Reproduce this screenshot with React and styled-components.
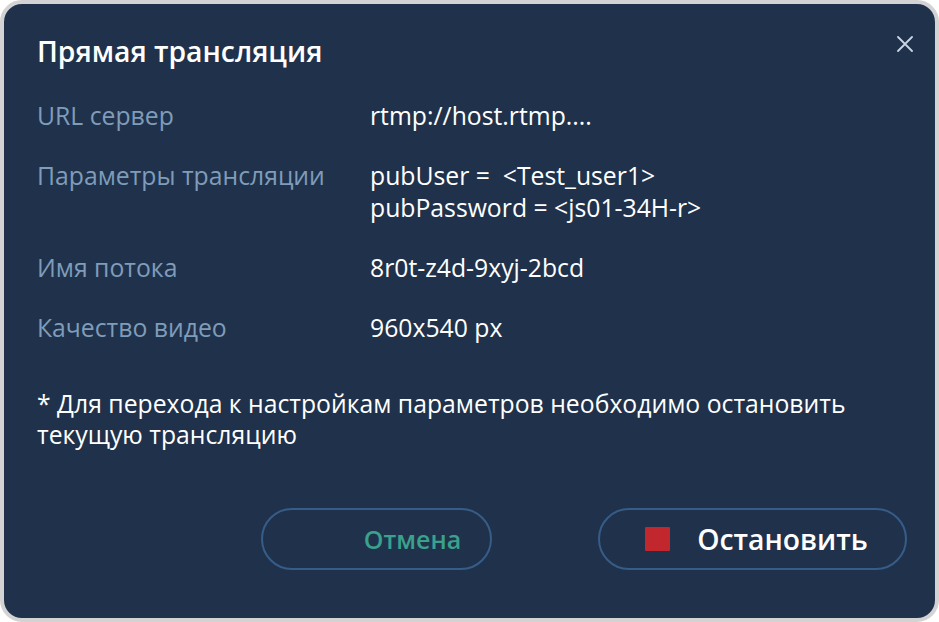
import React from "react";
import styled, { createGlobalStyle } from "styled-components";

const Global = createGlobalStyle`
  html, body { margin: 0; padding: 0; background: #ffffff; }
  body { font-family: "Open Sans", "Noto Sans", sans-serif; }
  * { box-sizing: border-box; }
`;

const Dialog = styled.div`
  position: relative;
  width: 939px;
  height: 622px;
  background: #20324b;
  border: 4px solid #d3d3d3;
  border-radius: 22px;
  padding: 29px 28px 0 33px;
  display: flex;
  flex-direction: column;
  color: #ffffff;
`;

const Title = styled.h1`
  margin: 0;
  font-size: 28.3px;
  font-weight: 600;
  line-height: 36px;
  color: #ffffff;
`;

const CloseButton = styled.button`
  position: absolute;
  top: 28px;
  right: 18px;
  width: 24px;
  height: 24px;
  padding: 0;
  border: none;
  background: transparent;
  display: flex;
  align-items: center;
  justify-content: center;
  cursor: pointer;
`;

const Rows = styled.div`
  margin-top: 31px;
  display: grid;
  grid-template-columns: 333px 1fr;
  row-gap: 28px;
`;

const Label = styled.div`
  font-size: 24.75px;
  line-height: 32px;
  color: #7f9cba;
`;

const Value = styled.div`
  font-size: 24.75px;
  line-height: 32px;
  color: #ffffff;
  white-space: pre;
`;

const Note = styled.p`
  margin: 44px 0 0 0;
  font-size: 24.75px;
  line-height: 31px;
  color: #ffffff;
`;

const Actions = styled.div`
  margin-top: auto;
  margin-bottom: 48px;
  display: flex;
  justify-content: flex-end;
  gap: 106px;
`;

const PillButton = styled.button`
  height: 62px;
  width: ${(p) => p.$width}px;
  border-radius: 31px;
  border: 2px solid #375c88;
  background: transparent;
  display: flex;
  align-items: center;
  justify-content: center;
  gap: 27px;
  padding: 0 0 0 ${(p) => (p.$primary ? 8 : 72)}px;
  font-family: "Open Sans", "Noto Sans", sans-serif;
  font-size: ${(p) => (p.$primary ? 28.3 : 25)}px;
  font-weight: 600;
  color: ${(p) => (p.$primary ? "#ffffff" : "#3aa18c")};
  cursor: pointer;
`;

const StopIcon = styled.span`
  width: 25px;
  height: 24px;
  background: #c1272d;
  border-radius: 1px;
  display: block;
`;

const rows = [
  ["URL сервер", "rtmp://host.rtmp...."],
  ["Параметры трансляции", "pubUser =  <Test_user1>\npubPassword = <js01-34H-r>"],
  ["Имя потока", "8r0t-z4d-9xyj-2bcd"],
  ["Качество видео", "960x540 px"],
];

export default function App() {
  return (
    <>
      <Global />
      <Dialog>
        <Title>Прямая трансляция</Title>
        <CloseButton aria-label="Закрыть">
          <svg width="16" height="16" viewBox="0 0 16 16">
            <path d="M1 1 L15 15 M15 1 L1 15" stroke="#c9d5e2" strokeWidth="1.8" strokeLinecap="round" />
          </svg>
        </CloseButton>
        <Rows>
          {rows.map(([l, v]) => (
            <React.Fragment key={l}>
              <Label>{l}</Label>
              <Value>{v}</Value>
            </React.Fragment>
          ))}
        </Rows>
        <Note>* Для перехода к настройкам параметров необходимо остановить текущую трансляцию</Note>
        <Actions>
          <PillButton $width={231}>Отмена</PillButton>
          <PillButton $width={309} $primary>
            <StopIcon />
            Остановить
          </PillButton>
        </Actions>
      </Dialog>
    </>
  );
}
